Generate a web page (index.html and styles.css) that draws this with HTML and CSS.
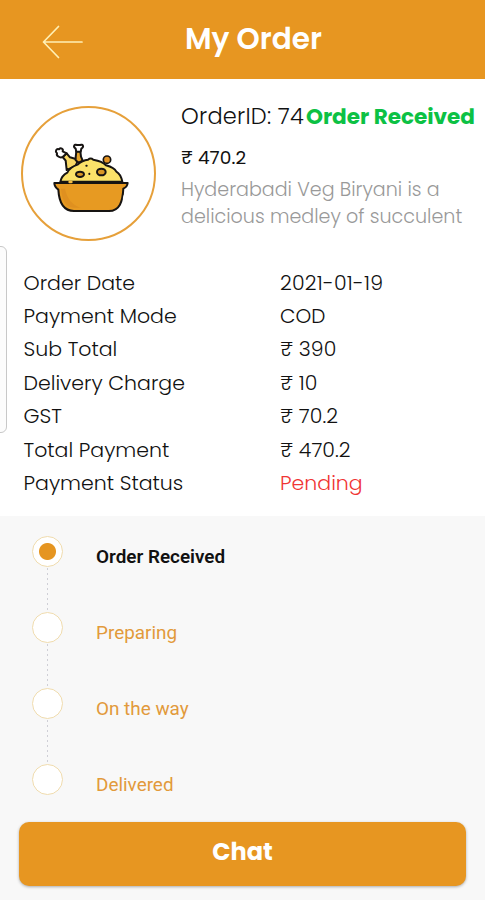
FILE: index.html
```
<!DOCTYPE html>
<html lang="en">
<head>
<meta charset="utf-8">
<meta name="viewport" content="width=device-width, initial-scale=1">
<title>My Order</title>
<link rel="stylesheet" href="styles.css">
</head>
<body>
<header class="topbar">
  <svg class="back" width="42" height="34" viewBox="0 0 42 34" fill="none" stroke="#fff0b5" stroke-width="1.7" stroke-linecap="round" stroke-linejoin="round"><path d="M16.500 1.500 1.500 17l15 15.500M1.500 17H40"/></svg>
  <h1 class="title">My Order</h1>
</header>
<main>
  <section class="order">
    <div class="photo">
      <svg width="95" height="85" viewBox="0 0 285 255" fill="none" stroke="#171412" stroke-width="6" stroke-linecap="round" stroke-linejoin="round">
        <path d="M65 108 62 80l-9-11 12-11 10 12 25 7-9 20z" fill="#f8d865"/>
        <path d="m53 69c-9 4-20-4-17-11-7-6-2-15 6-12 5-6 14-2 11 6l12 6z" fill="#fff"/>
        <path d="m92 70 2-18h12l2 16 5 12-12 6-9-7z" fill="#e5a52b"/>
        <path d="m94 53-2-9c-9-5-4-15 4-11h9c9-4 13 6 4 11l-2 9z" fill="#fff"/>
        <circle cx="186" cy="77" r="11" fill="#e49423" stroke-width="5"/>
        <path d="M46 143c3-14 11-22 21-27 6-12 18-20 31-24 9-9 19-14 31-15q8-7 16 0c17 3 30 8 38 17 15 4 27 11 31 19 11 6 15 16 18 30z" fill="#fbe269"/>
        <path d="M28 147h220c-1 9-6 14-13 17-2 39-11 67-43 67H87c-34 0-45-27-47-64-7-5-12-10-12-20z" fill="#e79a22"/>
        <path d="M48 164c2 31 14 57 38 57h20c-25-8-40-28-46-57z" fill="#df9020" stroke="none"/>
        <ellipse cx="105" cy="121" rx="12" ry="8" fill="#d99725"/>
        <ellipse cx="169" cy="114" rx="13" ry="10" fill="#d99725"/>
        <path d="M124 95h1M133 119v1" stroke-width="6"/>
        <path d="M74 144h5" stroke="#f6bd42" stroke-width="8"/>
        <path d="m239 186-2 7" stroke="#fff" stroke-width="7"/>
      </svg>
    </div>
    <div class="summary">
      <div class="heading"><span class="order-id">OrderID: 74</span><strong class="state">Order Received</strong></div>
      <div class="price">₹ 470.2</div>
      <p class="description">Hyderabadi Veg Biryani is a<br>delicious medley of succulent</p>
    </div>
  </section>
  <div class="edge-handle"></div>
  <dl class="details">
    <dt>Order Date</dt><dd class="date">2021-01-19</dd>
    <dt>Payment Mode</dt><dd class="mode">COD</dd>
    <dt>Sub Total</dt><dd>₹ 390</dd>
    <dt>Delivery Charge</dt><dd>₹ 10</dd>
    <dt>GST</dt><dd>₹ 70.2</dd>
    <dt>Total Payment</dt><dd>₹ 470.2</dd>
    <dt>Payment Status</dt><dd class="pending">Pending</dd>
  </dl>
  <section class="progress">
    <ol class="steps">
      <li class="step current"><span class="marker"></span><span class="label">Order Received</span></li>
      <li class="step"><span class="marker"></span><span class="label">Preparing</span></li>
      <li class="step"><span class="marker"></span><span class="label">On the way</span></li>
      <li class="step"><span class="marker"></span><span class="label">Delivered</span></li>
    </ol>
    <button class="chat" type="button">Chat</button>
  </section>
</main>
</body>
</html>
```
FILE: styles.css
```
* { box-sizing: border-box; }
body { margin: 0; background: #fff; color: #111; font-family: Poppins, Inter, "Liberation Sans", sans-serif; }
.topbar { height: 79px; background: #e79621; display: flex; align-items: flex-start; }
.back { margin: 25px 0 0 42px; flex: none; }
.title { margin: 22px 0 0 101px; color: #fff; font-size: 29.6px; line-height: 34px; font-weight: 600; white-space: nowrap; }
.order { height: 187px; display: flex; padding: 27px 0 0 21px; }
.photo { width: 135px; height: 135px; flex: none; border: 2px solid #e6a03a; border-radius: 50%; display: flex; align-items: center; justify-content: center; }
.photo svg { flex: none; margin: 6px 0 0 8px; }
.summary { margin-left: 25px; white-space: nowrap; }
.heading { display: flex; height: 42px; font-size: 22.5px; line-height: 21px; font-weight: 300; }
.order-id { width: 125px; letter-spacing: .25px; }
.state { color: #0cc144; font-size: 21.6px; line-height: 22px; font-weight: 700; letter-spacing: -.05px; }
.price { height: 29px; font-size: 18.5px; line-height: 20px; letter-spacing: .1px; font-weight: 400; }
.description { margin: 0; color: #999; font-size: 19.1px; line-height: 26.5px; font-weight: 300; }
.edge-handle { position: absolute; left: -8px; top: 246px; width: 15px; height: 187px; border: 1.5px solid #c8c8c8; border-radius: 6px; background: #fcfcfc; }
.details { margin: 0; height: 250px; padding: 0 0 0 23.5px; display: grid; grid-template-columns: 256.5px 1fr; grid-template-rows: repeat(7, 33.4px); align-items: center; font-size: 20.5px; line-height: 30px; font-weight: 300; white-space: nowrap; }
.details dd { margin: 0; }
.details .date { letter-spacing: .25px; }
.details .mode { font-size: 20px; }
.details .pending { color: #f03434; }
.progress { height: 384px; padding: 19.5px 19px 0; background: #f8f8f8; }
.steps { margin: 0; padding: 0 0 0 13px; list-style: none; height: 286.5px; }
.step { position: relative; height: 76px; display: flex; color: #e29a3b; font-family: Roboto, sans-serif; font-size: 18.9px; line-height: 22px; }
.marker { width: 31px; height: 31px; flex: none; border: 1.5px solid #f0dcae; border-radius: 50%; background: #fff; }
.label { margin: 10px 0 0 33px; }
.step:not(:last-child)::after { content: ""; position: absolute; left: 15px; top: 32px; width: 1px; height: 43px; background: repeating-linear-gradient(#cfcfd6 0 2px, transparent 2px 5px); }
.current { color: #111; font-weight: 600; }
.current .marker { background: radial-gradient(circle, #e59521 0 8px, #fff 9px); }
.chat { display: block; width: 447px; height: 64px; padding: 0 0 5px; border: 0; border-radius: 10px; background: #e79621; box-shadow: 0 1px 3px #aaa; color: #fff; font: 700 24px/30px Poppins, Inter, sans-serif; }
```
